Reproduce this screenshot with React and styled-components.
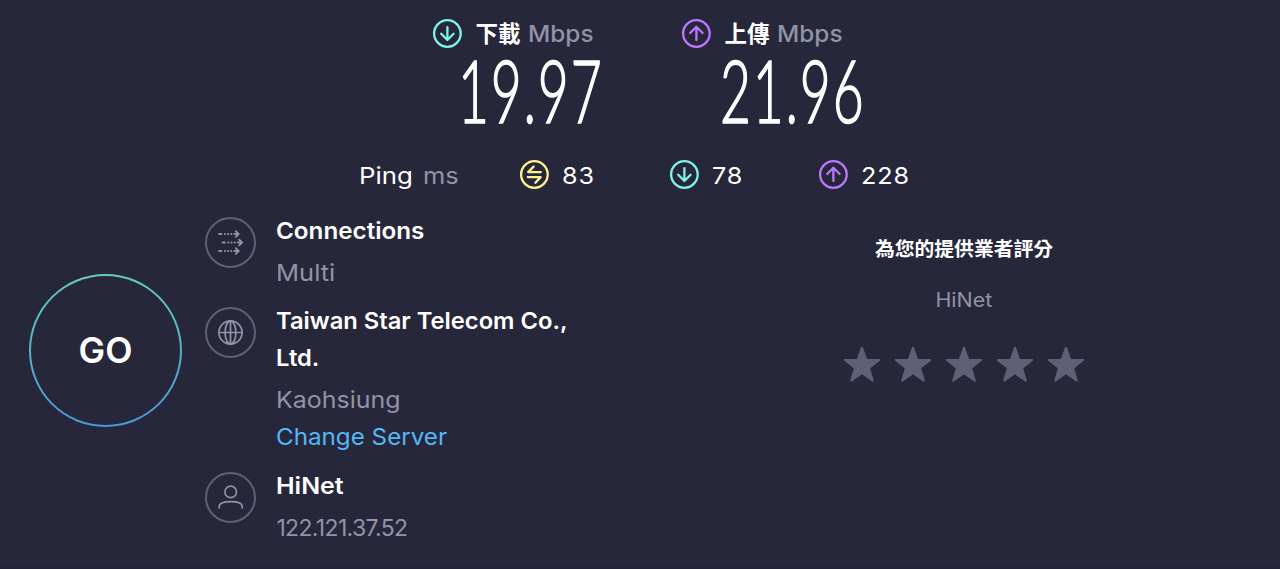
import styled, { createGlobalStyle } from "styled-components";

const colors = {
  bg: "#26273b",
  white: "#ffffff",
  muted: "#9193a8",
  ring: "#5f6077",
  down: "#80f4e8",
  up: "#bf76ff",
  idle: "#fff38e",
  link: "#55b8f5",
  star: "#5f6076",
};

const GlobalStyle = createGlobalStyle`
  * {
    box-sizing: border-box;
  }

  body {
    margin: 0;
    background-color: ${colors.bg};
    font-family: Inter, "Noto Sans CJK TC", sans-serif;
    -webkit-font-smoothing: antialiased;
  }
`;

const Container = styled.div`
  width: 1280px;
  height: 569px;
  padding-top: 18px;
  overflow: hidden;
  color: ${colors.white};
  background-color: ${colors.bg};
  border-bottom: 2px solid #222338;
`;

const Results = styled.div`
  display: flex;
  height: 141px;
  padding-left: 432px;
`;

const Result = styled.div`
  width: 249px;
`;

const ResultHead = styled.div`
  display: flex;
  align-items: center;
  height: 31px;
`;

const ResultName = styled.span`
  margin-left: 12.5px;
  font-family: "Noto Sans CJK TC", sans-serif;
  font-size: 22.5px;
  font-weight: 700;
  line-height: 29px;
  height: 31px;
`;

const Unit = styled.span`
  margin-left: ${(p) => p.$gap}px;
  color: ${colors.muted};
  font-size: ${(p) => p.$size || 23}px;
  font-weight: ${(p) => p.$weight || 500};
  transform: scaleX(1.06);
  transform-origin: left center;
`;

const Speed = styled.div`
  width: max-content;
  margin-left: ${(p) => p.$left}px;
  font-family: Lato, sans-serif;
  font-size: 87.5px;
  font-weight: 300;
  line-height: 82px;
  letter-spacing: 3px;
  -webkit-text-stroke: 1.7px ${colors.white};
  transform: scaleX(0.61);
  transform-origin: left center;
`;

const PingRow = styled.div`
  display: flex;
  align-items: center;
  height: 31px;
  padding-left: 359px;
  font-size: 23.5px;
`;

const PingLabel = styled.div`
  display: flex;
  align-items: baseline;
  width: 160px;
  padding-top: 1px;
`;

const PingName = styled.span`
  transform: scaleX(1.1);
  transform-origin: left center;
`;

const PingItem = styled.div`
  display: flex;
  align-items: center;
  width: 149.5px;
`;

const PingValue = styled.span`
  margin-left: 12px;
  padding-top: 1px;
  letter-spacing: 0.8px;
  transform: scaleX(1.07);
  transform-origin: left center;
`;

const Body = styled.div`
  display: flex;
  padding-top: 22px;
`;

const GoButton = styled.button`
  width: 153px;
  height: 153px;
  margin: 62px 23px 0 29px;
  padding: 0;
  border: 2px solid transparent;
  border-radius: 50%;
  color: ${colors.white};
  background: linear-gradient(${colors.bg}, ${colors.bg}) padding-box,
    linear-gradient(#67cbbd, #4a96d2) border-box;
  font-family: inherit;
  font-size: 35.5px;
  font-weight: 600;
`;

const Details = styled.div`
  display: flex;
  flex-direction: column;
  gap: 10.4px;
  width: 443px;
`;

const Detail = styled.div`
  display: flex;
`;

const DetailBody = styled.div`
  padding-top: 1px;
`;

const IconRing = styled.div`
  display: flex;
  flex: none;
  align-items: center;
  justify-content: center;
  width: 51px;
  height: 51px;
  margin: 5px 20.4px 0 0;
  border: 2px solid ${colors.ring};
  border-radius: 50%;
`;

const DetailTitle = styled.div`
  width: max-content;
  margin-bottom: 5px;
  font-size: 23px;
  font-weight: 600;
  line-height: 37px;
  transform: scaleX(${(p) => p.$stretch || 1});
  transform-origin: left center;
`;

const DetailText = styled.div`
  width: max-content;
  color: ${(p) => (p.$link ? colors.link : colors.muted)};
  font-size: 23px;
  line-height: 37px;
  letter-spacing: ${(p) => p.$spacing || 0}px;
  transform: scaleX(${(p) => p.$stretch || 1});
  transform-origin: left center;
`;

const Rating = styled.div`
  display: flex;
  flex-direction: column;
  align-items: center;
  width: 632px;
  padding-top: 21px;
`;

const RatingTitle = styled.div`
  font-family: "Noto Sans CJK TC", sans-serif;
  font-size: 19.8px;
  font-weight: 700;
  line-height: 30px;
`;

const Provider = styled.div`
  margin-top: 22px;
  color: ${colors.muted};
  font-size: 19.5px;
  line-height: 30px;
  transform: scaleX(1.1);
`;

const Stars = styled.div`
  display: flex;
  gap: 13px;
  margin-top: 30px;
`;

const Arrow = ({ color, up }) => (
  <svg width="31" height="31" viewBox="0 0 31 31" fill="none" stroke={color} strokeWidth="2.3" strokeLinecap="round" strokeLinejoin="round">
    <circle cx="15.4" cy="15.5" r="13.3" />
    <path d={up ? "M15.4 22V9.2M9.2 15l6.2-6.2 6.2 6.2" : "M15.4 9.2v12.5M9.2 15.8l6.2 6.2 6.2-6.2"} />
  </svg>
);

const IdleIcon = () => (
  <svg width="31" height="31" viewBox="0 0 31 31" fill="none" stroke={colors.idle} strokeWidth="2.3" strokeLinecap="round" strokeLinejoin="round">
    <circle cx="15.4" cy="15.5" r="13.3" />
    <path d="M21.8 13.1H9.2L14.6 7.6M8.8 18.1H21.6L16.4 23.7" />
  </svg>
);

const ConnectionsIcon = () => (
  <svg width="27" height="27" viewBox="0 0 27 27" fill="none" stroke={colors.muted} strokeWidth="1.8" strokeLinecap="round" strokeLinejoin="round">
    {[[1.6, 5], [5, 13.5], [1.6, 22]].map(([x, y]) => (
      <g key={y} transform={`translate(${x} ${y})`}>
        <path d="M0.5 0h2.3M6.2 0h.3M9.4 0h.3M12.6 0h.3M15.8 0h4M17.2 -2.9l2.9 2.9-2.9 2.9" />
      </g>
    ))}
  </svg>
);

const GlobeIcon = () => (
  <svg width="27" height="27" viewBox="0 0 27 27" fill="none" stroke={colors.muted} strokeWidth="1.7">
    <circle cx="13.5" cy="13.5" r="11.6" />
    <ellipse cx="13.5" cy="13.5" rx="5.4" ry="11.6" />
    <path d="M13.5 1.9v23.2M1.9 13.5h23.2" />
  </svg>
);

const UserIcon = () => (
  <svg width="27" height="27" viewBox="0 0 27 27" fill="none" stroke={colors.muted} strokeWidth="1.7" strokeLinecap="round">
    <circle cx="13.7" cy="7.9" r="5.8" />
    <path d="M2.2 23.8v-1.2c0-3.2 4.4-4.9 11.5-4.9s11.5 1.7 11.5 4.9v1.2" />
  </svg>
);

const Star = () => (
  <svg width="38" height="38" viewBox="0 0 38 38" fill={colors.star} stroke={colors.star} strokeWidth="2" strokeLinejoin="round">
    <path d="M19 2.7l4.2 12 13 .2-10.2 8 3.8 12.9L19 28.3 8.2 35.8l3.8-12.9L1.8 14.9l13-.2z" />
  </svg>
);

const App = () => {
  return (
    <>
      <GlobalStyle />
      <Container>
        <Results>
          <Result>
            <ResultHead>
              <Arrow color={colors.down} />
              <ResultName>下載</ResultName>
              <Unit $gap={7}>Mbps</Unit>
            </ResultHead>
            <Speed $left={26}>19.97</Speed>
          </Result>
          <Result>
            <ResultHead>
              <Arrow color={colors.up} up />
              <ResultName>上傳</ResultName>
              <Unit $gap={7}>Mbps</Unit>
            </ResultHead>
            <Speed $left={39}>21.96</Speed>
          </Result>
        </Results>

        <PingRow>
          <PingLabel>
            <PingName>Ping</PingName>
            <Unit $gap={15} $size={24} $weight={400}>ms</Unit>
          </PingLabel>
          <PingItem>
            <IdleIcon />
            <PingValue>83</PingValue>
          </PingItem>
          <PingItem>
            <Arrow color={colors.down} />
            <PingValue>78</PingValue>
          </PingItem>
          <PingItem>
            <Arrow color={colors.up} up />
            <PingValue>228</PingValue>
          </PingItem>
        </PingRow>

        <Body>
          <GoButton>GO</GoButton>
          <Details>
            <Detail>
              <IconRing>
                <ConnectionsIcon />
              </IconRing>
              <DetailBody>
                <DetailTitle $stretch={1.053}>Connections</DetailTitle>
                <DetailText $stretch={1.11}>Multi</DetailText>
              </DetailBody>
            </Detail>
            <Detail>
              <IconRing>
                <GlobeIcon />
              </IconRing>
              <DetailBody>
                <DetailTitle $stretch={1.032}>
                  Taiwan Star Telecom Co.,
                  <br />
                  Ltd.
                </DetailTitle>
                <DetailText $stretch={1.085}>Kaohsiung</DetailText>
                <DetailText $link $stretch={1.052}>Change Server</DetailText>
              </DetailBody>
            </Detail>
            <Detail>
              <IconRing>
                <UserIcon />
              </IconRing>
              <DetailBody>
                <DetailTitle $stretch={1.085}>HiNet</DetailTitle>
                <DetailText $spacing={-0.65}>122.121.37.52</DetailText>
              </DetailBody>
            </Detail>
          </Details>
          <Rating>
            <RatingTitle>為您的提供業者評分</RatingTitle>
            <Provider>HiNet</Provider>
            <Stars>
              {[1, 2, 3, 4, 5].map((n) => (
                <Star key={n} />
              ))}
            </Stars>
          </Rating>
        </Body>
      </Container>
    </>
  );
};

export default App;
